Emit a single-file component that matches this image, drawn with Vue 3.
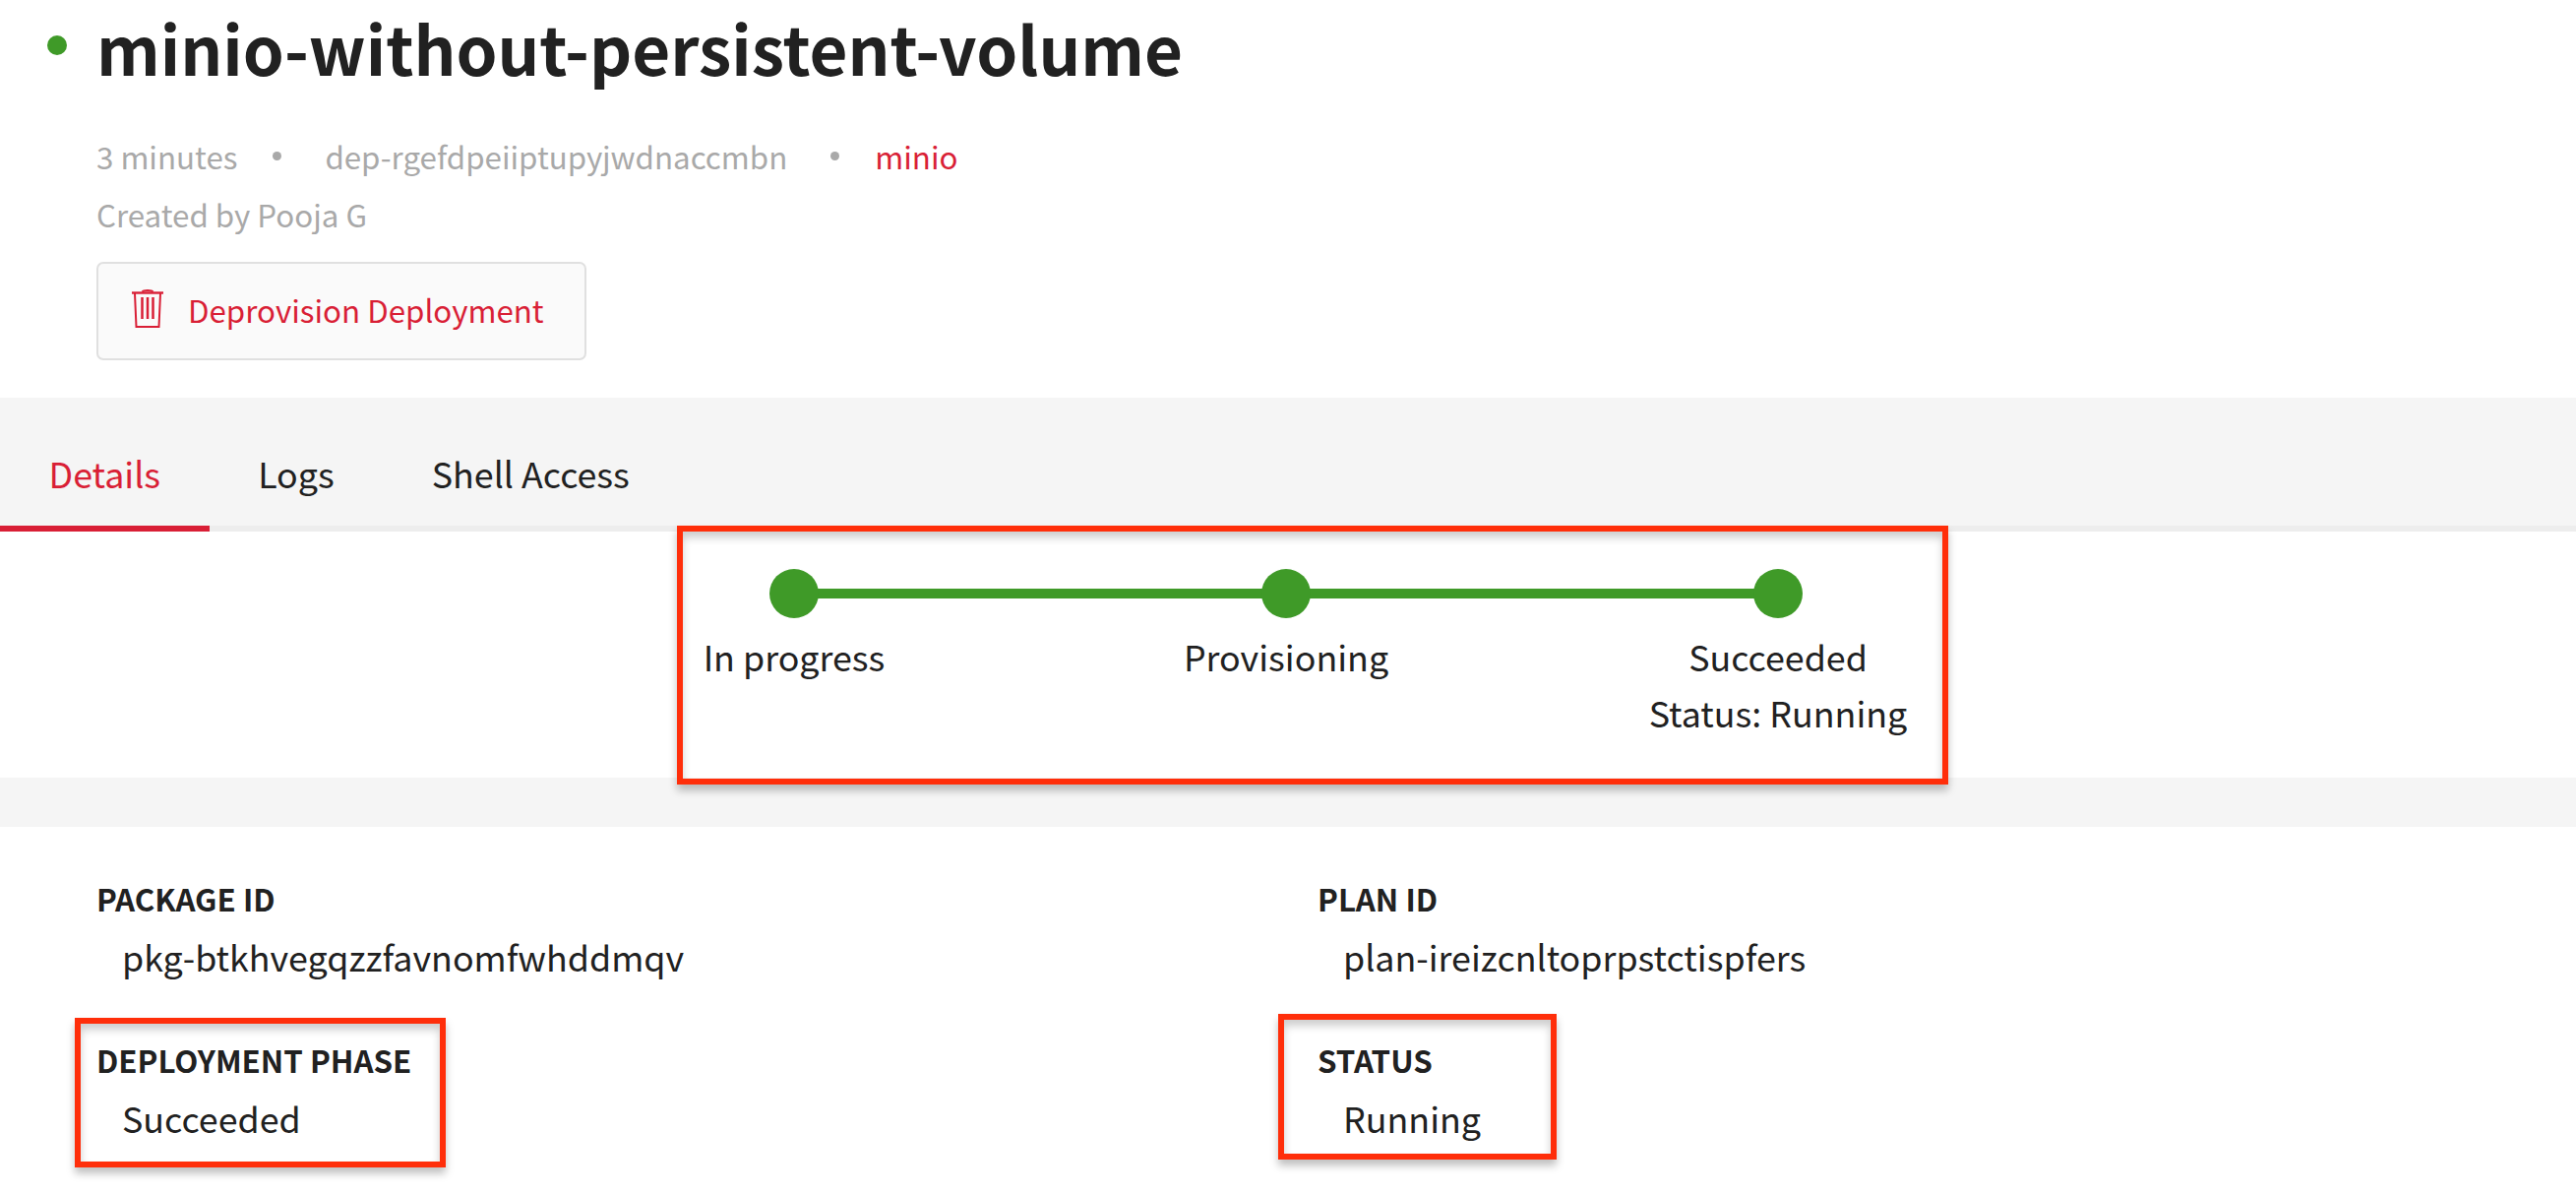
<template>
  <div class="page">
    <header class="head">
      <div class="title-row">
        <span class="live-dot"></span>
        <h1 class="title">minio-without-persistent-volume</h1>
      </div>
      <div class="meta">
        <span class="meta-age">3 minutes</span>
        <span class="sep"></span>
        <span class="meta-id">dep-rgefdpeiiptupyjwdnaccmbn</span>
        <span class="sep"></span>
        <span class="meta-link">minio</span>
      </div>
      <div class="creator">Created by Pooja G</div>
      <button class="deprovision">
        <svg class="trash" viewBox="0 0 32 39" fill="none" stroke="currentColor" stroke-width="2">
          <path d="M0 3.5H32" stroke-width="2.4" />
          <path d="M10.5 2.5C12 0.6 20 0.6 21.5 2.5" />
          <path d="M3 4L4.5 38H27.5L29 4" />
          <path d="M10.5 8V30M16 8V30M21.5 8V30" stroke-width="2.5" />
        </svg>
        <span class="deprovision-text">Deprovision Deployment</span>
      </button>
    </header>

    <nav class="tabs">
      <a
        v-for="(tab, idx) in tabs"
        :key="tab"
        class="tab"
        :class="{ active: idx === 0 }"
      >{{ tab }}</a>
    </nav>

    <section class="progress">
      <div class="stepper">
        <div v-for="(step, idx) in steps" :key="step.label" class="step" :class="{ linked: idx < steps.length - 1 }">
          <span class="step-dot"></span>
          <div class="step-label">{{ step.label }}</div>
          <div v-if="step.sub" class="step-label">{{ step.sub }}</div>
        </div>
        <div class="callout callout-steps"></div>
      </div>
    </section>

    <div class="band"></div>

    <section class="details">
      <div v-for="item in fields" :key="item.name" class="field">
        <div class="field-name">{{ item.name }}</div>
        <div class="field-value">{{ item.value }}</div>
        <div v-if="item.callout" class="callout" :class="item.callout"></div>
      </div>
    </section>
  </div>
</template>

<script setup>
const tabs = ['Details', 'Logs', 'Shell Access']

const steps = [
  { label: 'In progress' },
  { label: 'Provisioning' },
  { label: 'Succeeded', sub: 'Status: Running' }
]

const fields = [
  { name: 'PACKAGE ID', value: 'pkg-btkhvegqzzfavnomfwhddmqv' },
  { name: 'PLAN ID', value: 'plan-ireizcnltoprpstctispfers' },
  { name: 'DEPLOYMENT PHASE', value: 'Succeeded', callout: 'callout-phase' },
  { name: 'STATUS', value: 'Running', callout: 'callout-status' }
]
</script>

<style scoped>
.page {
  width: 2618px;
  height: 1214px;
  overflow: hidden;
  background: #fff;
  color: #212121;
  font-family: "Noto Sans CJK SC", "Noto Sans", sans-serif;
}

.head {
  height: 404px;
  padding-left: 98px;
  box-sizing: border-box;
}

.title-row {
  position: relative;
  height: 104px;
}

.live-dot {
  position: absolute;
  left: -50px;
  top: 36px;
  width: 20px;
  height: 20px;
  border-radius: 50%;
  background: #3f9a28;
}

.title {
  margin: 0;
  font-size: 67.2px;
  line-height: 96px;
  font-weight: 700;
}

.meta {
  display: flex;
  align-items: center;
  margin-top: 26px;
  height: 56px;
  font-size: 31.3px;
  color: #a9a9a9;
}

.sep {
  width: 9px;
  height: 9px;
  margin: 0 36px;
  border-radius: 50%;
  background: #a9a9a9;
}

.meta-id {
  margin: 0 8px;
}

.meta-link {
  color: #d91f36;
}

.creator {
  margin-top: 4px;
  height: 56px;
  line-height: 56px;
  font-size: 31.3px;
  color: #a9a9a9;
}

.deprovision {
  display: flex;
  align-items: center;
  gap: 25px;
  margin-top: 20px;
  width: 498px;
  height: 100px;
  padding: 0 0 0 34px;
  box-sizing: border-box;
  border: 2px solid #e0e0e0;
  border-radius: 7px;
  background: #fafafa;
  color: #d91f36;
  font-family: inherit;
  font-size: 31.3px;
}

.deprovision-text {
  margin-top: -3px;
}

.trash {
  width: 32px;
  height: 39px;
  margin-top: -6px;
}

.tabs {
  display: flex;
  height: 136px;
  box-sizing: border-box;
  background: #f5f5f5;
  border-bottom: 6px solid #ededed;
}

.tab {
  height: 136px;
  box-sizing: border-box;
  padding: 48px 49.5px 0;
  font-size: 35.8px;
  line-height: 56px;
}

.tab.active {
  color: #d91f36;
  border-bottom: 6px solid #d91f36;
}

.progress {
  height: 250px;
}

.stepper {
  position: relative;
  display: grid;
  grid-template-columns: repeat(3, 500px);
  width: 1500px;
  margin-left: 557px;
  padding-top: 38px;
  box-sizing: border-box;
  height: 250px;
}

.step {
  position: relative;
  display: flex;
  flex-direction: column;
  align-items: center;
}

.step.linked::before {
  content: "";
  position: absolute;
  left: 250px;
  top: 20px;
  width: 500px;
  height: 10px;
  background: #3f9a28;
}

.step-dot {
  position: relative;
  width: 50px;
  height: 50px;
  margin-bottom: 10px;
  border-radius: 50%;
  background: #3f9a28;
}

.step-label {
  font-size: 35.8px;
  line-height: 57px;
  white-space: nowrap;
}

.band {
  height: 50px;
  background: #f5f5f5;
}

.details {
  display: grid;
  grid-template-columns: 1241px 1fr;
  grid-auto-rows: 164px;
  padding: 48px 0 0 98px;
}

.field {
  position: relative;
}

.field-name {
  font-size: 31.3px;
  line-height: 50px;
  font-weight: 700;
}

.field-value {
  margin-top: 5px;
  padding-left: 26px;
  font-size: 35.8px;
  line-height: 56px;
}

.callout {
  position: absolute;
  box-sizing: border-box;
  border: 6px solid #ff2e0a;
  box-shadow: 0 6px 8px rgba(0, 0, 0, 0.25), inset 0 6px 8px rgba(0, 0, 0, 0.2);
  pointer-events: none;
}

.callout-steps {
  left: 131px;
  top: -6px;
  width: 1292px;
  height: 263px;
}

.callout-phase {
  left: -22px;
  top: -18px;
  width: 377px;
  height: 152px;
}

.callout-status {
  left: -40px;
  top: -22px;
  width: 283px;
  height: 148px;
}
</style>

<style>
html,
body {
  margin: 0;
  background: #fff;
}
</style>
